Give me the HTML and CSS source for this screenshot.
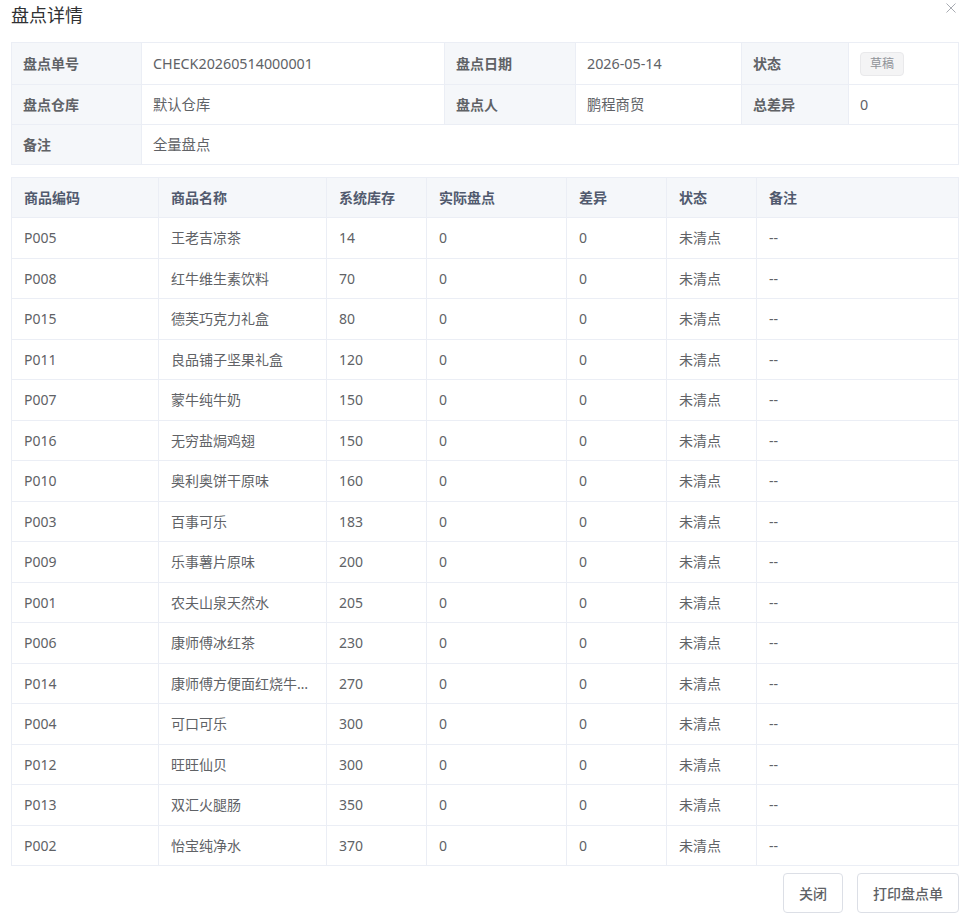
FILE: index.html
```html
<!DOCTYPE html>
<html lang="zh-CN">
<head>
    <meta charset="UTF-8">
    <meta name="viewport" content="width=device-width, initial-scale=1.0">
    <title>盘点详情</title>
    <link rel="stylesheet" href="styles.css">
</head>
<body>
    <div class="dialog">
        <div class="dialog-header">
            <span class="dialog-title">盘点详情</span>
            <button class="dialog-close" aria-label="关闭">
                <svg width="10" height="10" viewBox="0 0 10 10"><path d="M0.5 0.5 L9.5 9.5 M9.5 0.5 L0.5 9.5" stroke="#a8abb2" stroke-width="1" fill="none"/></svg>
            </button>
        </div>

        <div class="desc">
            <div class="desc-label row1">盘点单号</div>
            <div class="desc-content row1">CHECK20260514000001</div>
            <div class="desc-label row1">盘点日期</div>
            <div class="desc-content row1">2026-05-14</div>
            <div class="desc-label row1">状态</div>
            <div class="desc-content row1"><span class="tag">草稿</span></div>

            <div class="desc-label">盘点仓库</div>
            <div class="desc-content">默认仓库</div>
            <div class="desc-label">盘点人</div>
            <div class="desc-content">鹏程商贸</div>
            <div class="desc-label">总差异</div>
            <div class="desc-content">0</div>

            <div class="desc-label">备注</div>
            <div class="desc-content span-all">全量盘点</div>
        </div>

        <table class="goods">
            <colgroup>
                <col style="width:147px">
                <col style="width:168px">
                <col style="width:100px">
                <col style="width:140px">
                <col style="width:100px">
                <col style="width:90px">
                <col>
            </colgroup>
            <thead>
                <tr>
                    <th>商品编码</th>
                    <th>商品名称</th>
                    <th>系统库存</th>
                    <th>实际盘点</th>
                    <th>差异</th>
                    <th>状态</th>
                    <th>备注</th>
                </tr>
            </thead>
            <tbody>
                <tr><td>P005</td><td>王老吉凉茶</td><td>14</td><td>0</td><td>0</td><td>未清点</td><td>--</td></tr>
                <tr><td>P008</td><td>红牛维生素饮料</td><td>70</td><td>0</td><td>0</td><td>未清点</td><td>--</td></tr>
                <tr><td>P015</td><td>德芙巧克力礼盒</td><td>80</td><td>0</td><td>0</td><td>未清点</td><td>--</td></tr>
                <tr><td>P011</td><td>良品铺子坚果礼盒</td><td>120</td><td>0</td><td>0</td><td>未清点</td><td>--</td></tr>
                <tr><td>P007</td><td>蒙牛纯牛奶</td><td>150</td><td>0</td><td>0</td><td>未清点</td><td>--</td></tr>
                <tr><td>P016</td><td>无穷盐焗鸡翅</td><td>150</td><td>0</td><td>0</td><td>未清点</td><td>--</td></tr>
                <tr><td>P010</td><td>奥利奥饼干原味</td><td>160</td><td>0</td><td>0</td><td>未清点</td><td>--</td></tr>
                <tr><td>P003</td><td>百事可乐</td><td>183</td><td>0</td><td>0</td><td>未清点</td><td>--</td></tr>
                <tr><td>P009</td><td>乐事薯片原味</td><td>200</td><td>0</td><td>0</td><td>未清点</td><td>--</td></tr>
                <tr><td>P001</td><td>农夫山泉天然水</td><td>205</td><td>0</td><td>0</td><td>未清点</td><td>--</td></tr>
                <tr><td>P006</td><td>康师傅冰红茶</td><td>230</td><td>0</td><td>0</td><td>未清点</td><td>--</td></tr>
                <tr><td>P014</td><td>康师傅方便面红烧牛肉面</td><td>270</td><td>0</td><td>0</td><td>未清点</td><td>--</td></tr>
                <tr><td>P004</td><td>可口可乐</td><td>300</td><td>0</td><td>0</td><td>未清点</td><td>--</td></tr>
                <tr><td>P012</td><td>旺旺仙贝</td><td>300</td><td>0</td><td>0</td><td>未清点</td><td>--</td></tr>
                <tr><td>P013</td><td>双汇火腿肠</td><td>350</td><td>0</td><td>0</td><td>未清点</td><td>--</td></tr>
                <tr><td>P002</td><td>怡宝纯净水</td><td>370</td><td>0</td><td>0</td><td>未清点</td><td>--</td></tr>
            </tbody>
        </table>

        <div class="dialog-footer">
            <button class="btn">关闭</button>
            <button class="btn">打印盘点单</button>
        </div>
    </div>
</body>
</html>
```

FILE: styles.css
```css
body {
  margin: 0;
  background-color: #fff;
  font-family: "Noto Sans", "Noto Sans CJK SC", sans-serif;
  font-size: 14px;
  color: #606266;
}

.dialog {
  position: relative;
  width: 948px;
  padding: 0 8px 0 11px;
}

.dialog-header {
  height: 42px;
}

.dialog-title {
  display: block;
  padding-top: 3px;
  font-size: 18px;
  line-height: 24px;
  color: #303133;
}

.dialog-close {
  position: absolute;
  top: 2px;
  right: 10px;
  width: 12px;
  height: 12px;
  padding: 1px;
  border: none;
  background: none;
  cursor: pointer;
}

.dialog-close svg {
  display: block;
}

/* info block */
.desc {
  display: grid;
  grid-template-columns: 130px 303px 131px 166px 107px 110px;
  grid-template-rows: 42px 40px 40px;
  border-top: 1px solid #ebeef5;
  border-left: 1px solid #ebeef5;
  box-sizing: border-box;
  width: 948px;
}

.desc-label,
.desc-content {
  display: flex;
  align-items: center;
  padding: 0 11px;
  border-right: 1px solid #ebeef5;
  border-bottom: 1px solid #ebeef5;
  line-height: 23px;
}

.desc-label {
  background-color: #f5f7fa;
  font-weight: bold;
  color: #606266;
}

.desc-content {
  background-color: #fff;
  font-size: 14.3px;
}

.span-all {
  grid-column: span 5;
}

.tag {
  display: inline-flex;
  align-items: center;
  justify-content: center;
  height: 22px;
  padding: 0 9px;
  border: 1px solid #e9e9eb;
  border-radius: 4px;
  background-color: #f4f4f5;
  color: #909399;
  font-size: 12px;
}

/* goods table */
.goods {
  width: 948px;
  margin-top: 12px;
  border-collapse: collapse;
  table-layout: fixed;
  border: 1px solid #ebeef5;
}

.goods th,
.goods td {
  padding: 0 12px;
  border: 1px solid #ebeef5;
  text-align: left;
  white-space: nowrap;
  overflow: hidden;
  text-overflow: ellipsis;
  line-height: 23px;
}

.goods th {
  height: 39px;
  background-color: #f5f7fa;
  color: #515a6e;
  font-weight: bold;
}

.goods td {
  height: 39.5px;
  color: #606266;
}

.dialog-footer {
  display: flex;
  justify-content: flex-end;
  gap: 14px;
  padding-top: 7px;
}

.btn {
  height: 40px;
  padding: 0 15px;
  border: 1px solid #dcdfe6;
  border-radius: 4px;
  background-color: #fff;
  color: #606266;
  font-family: inherit;
  font-size: 14px;
  font-weight: 500;
  cursor: pointer;
}

.btn:hover {
  color: #409eff;
  border-color: #c6e2ff;
  background-color: #ecf5ff;
}
```
